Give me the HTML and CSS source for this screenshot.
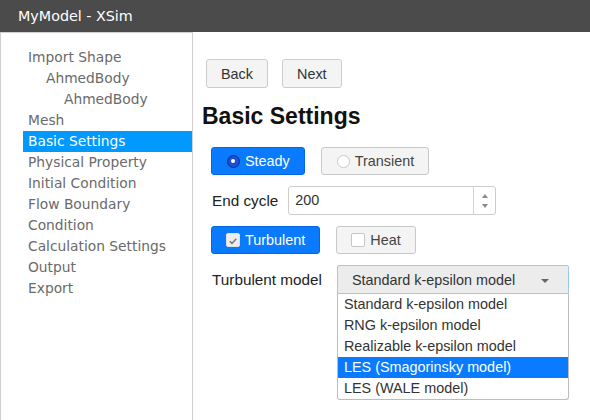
FILE: index.html
```html
<!DOCTYPE html>
<html>
<head>
<meta charset="utf-8">
<link rel="stylesheet" href="styles.css">
</head>
<body>
<header class="titlebar">MyModel - XSim</header>
<div class="main">
  <nav class="sidebar">
    <ul class="tree">
      <li class="item">Import Shape</li>
      <li class="item lvl1">AhmedBody</li>
      <li class="item lvl2">AhmedBody</li>
      <li class="item">Mesh</li>
      <li class="item active">Basic Settings</li>
      <li class="item">Physical Property</li>
      <li class="item">Initial Condition</li>
      <li class="item">Flow Boundary</li>
      <li class="item">Condition</li>
      <li class="item">Calculation Settings</li>
      <li class="item">Output</li>
      <li class="item">Export</li>
    </ul>
  </nav>
  <section class="content">
    <div class="nav">
      <button class="btn">Back</button>
      <button class="btn">Next</button>
    </div>
    <h1 class="heading">Basic Settings</h1>
    <div class="form">
      <div class="row">
        <span class="toggle on"><span class="radio checked"></span>Steady</span>
        <span class="toggle"><span class="radio"></span>Transient</span>
      </div>
      <div class="row field">
        <span class="label label-short">End cycle</span>
        <span class="number">
          <span class="number-value">200</span>
          <span class="spin"><span class="up"></span><span class="down"></span></span>
        </span>
      </div>
      <div class="row">
        <span class="toggle on"><span class="check checked"><svg viewBox="0 0 14 14" width="14" height="14"><path d="M3.2 7.2 L5.8 9.8 L10.8 4.4" fill="none" stroke="#777" stroke-width="1.8"/></svg></span>Turbulent</span>
        <span class="toggle"><span class="check"></span>Heat</span>
      </div>
      <div class="row field">
        <span class="label label-long">Turbulent model</span>
        <div class="select-wrap">
          <div class="select">Standard k-epsilon model<span class="caret"></span></div>
          <ul class="options">
            <li class="option">Standard k-epsilon model</li>
            <li class="option">RNG k-epsilon model</li>
            <li class="option">Realizable k-epsilon model</li>
            <li class="option selected">LES (Smagorinsky model)</li>
            <li class="option">LES (WALE model)</li>
          </ul>
        </div>
      </div>
    </div>
  </section>
</div>
</body>
</html>
```
FILE: styles.css
```css
html, body {
  margin: 0;
  padding: 0;
  background: #fff;
  height: 100%;
}
body {
  font-family: "Liberation Sans", Arial, sans-serif;
  overflow: hidden;
}
.titlebar {
  height: 32px;
  background: #4b4b4b;
  color: #fff;
  font-family: "DejaVu Sans", Verdana, sans-serif;
  font-size: 14.3px;
  line-height: 32px;
  padding-left: 18px;
}
.main {
  display: flex;
  height: 388px;
}
.sidebar {
  width: 191px;
  border: 1px solid #cfcfcf;
  border-bottom: none;
  flex: none;
}
.tree {
  list-style: none;
  margin: 0;
  padding: 14px 0 0 22px;
}
.item {
  font-family: "DejaVu Sans", Verdana, sans-serif;
  font-size: 13.8px;
  line-height: 21px;
  color: #6a6a6a;
  padding-left: 5px;
  white-space: nowrap;
}
.item.lvl1 { padding-left: 23px; }
.item.lvl2 { padding-left: 41px; }
.item.active {
  background: #0099ff;
  color: #fff;
}
.content {
  flex: 1;
  padding: 27px 0 0 9px;
}
.nav {
  display: flex;
  gap: 14px;
  margin-left: 4px;
}
.btn {
  height: 29px;
  padding: 0 14px;
  border: 1px solid #cccccc;
  border-radius: 3px;
  background: #f4f4f4;
  color: #333;
  font-family: "Liberation Sans", Arial, sans-serif;
  font-size: 14.4px;
}
.heading {
  margin: 15px 0 0 0;
  font-size: 23px;
  line-height: 26px;
  font-weight: bold;
  color: #111;
}
.form {
  margin: 18px 0 0 9px;
  display: flex;
  flex-direction: column;
  gap: 11px;
}
.row {
  display: flex;
  align-items: center;
  gap: 16px;
  height: 28px;
}
.row.field {
  height: 29px;
  gap: 0;
}
.toggle {
  display: flex;
  align-items: center;
  gap: 5px;
  height: 26px;
  padding: 0 14px;
  border: 1px solid #c8c8c8;
  border-radius: 3px;
  background: #f4f4f4;
  color: #444;
  font-size: 14.4px;
}
.toggle.on {
  background: #0a7bff;
  border-color: #0666e0;
  color: #fff;
}
.radio {
  width: 13px;
  height: 13px;
  border-radius: 50%;
  border: 1px solid #c9c9c9;
  background: #fff;
  box-sizing: border-box;
  position: relative;
  margin-left: 1px;
}
.radio.checked {
  background: #1a4fd8;
  border: 1.5px solid #0a2e9e;
}
.radio.checked::after {
  content: "";
  position: absolute;
  left: 3px;
  top: 3px;
  width: 4px;
  height: 4px;
  border-radius: 50%;
  background: #fff;
}
.check {
  width: 14px;
  height: 14px;
  box-sizing: border-box;
  border: 1px solid #c6c6c6;
  border-radius: 2px;
  background: #fff;
  display: flex;
}
.check.checked {
  background: #eeeeee;
  border-color: #e0e0e0;
}
.label {
  font-size: 15.3px;
  color: #222;
  margin-left: 1px;
}
.label-short { margin-right: 10px; }
.label-long { margin-right: 15px; }
.number {
  display: flex;
  width: 206px;
  height: 27px;
  border: 1px solid #cccccc;
  border-radius: 3px;
  background: #fff;
}
.number-value {
  flex: 1;
  font-size: 14.4px;
  color: #333;
  line-height: 27px;
  padding-left: 6px;
}
.spin {
  width: 21px;
  border-left: 1px solid #d4d4d4;
  display: flex;
  flex-direction: column;
  align-items: center;
  justify-content: center;
  gap: 6px;
}
.up, .down {
  width: 0;
  height: 0;
  border-left: 3.5px solid transparent;
  border-right: 3.5px solid transparent;
}
.up { border-bottom: 4px solid #8a8a8a; }
.down { border-top: 4px solid #8a8a8a; }
.select-wrap {
  position: relative;
  width: 232px;
}
.select {
  height: 27px;
  border: 1px solid #9cc8f2;
  border-radius: 2px 2px 0 0;
  background: #ececec;
  color: #333;
  font-size: 14.4px;
  line-height: 28px;
  padding-left: 14px;
  position: relative;
}
.caret {
  position: absolute;
  right: 19px;
  top: 13px;
  width: 0;
  height: 0;
  border-left: 4px solid transparent;
  border-right: 4px solid transparent;
  border-top: 4px solid #666;
}
.options {
  position: absolute;
  left: 0;
  right: 0;
  top: 29px;
  margin: 0;
  padding: 0;
  list-style: none;
  background: #fff;
  border: 1px solid #bdbdbd;
  border-top: none;
  border-radius: 0 0 3px 3px;
}
.option {
  font-size: 14.4px;
  line-height: 21px;
  color: #333;
  padding-left: 6px;
  white-space: nowrap;
}
.option.selected {
  background: #0a7bff;
  color: #fff;
}
```
